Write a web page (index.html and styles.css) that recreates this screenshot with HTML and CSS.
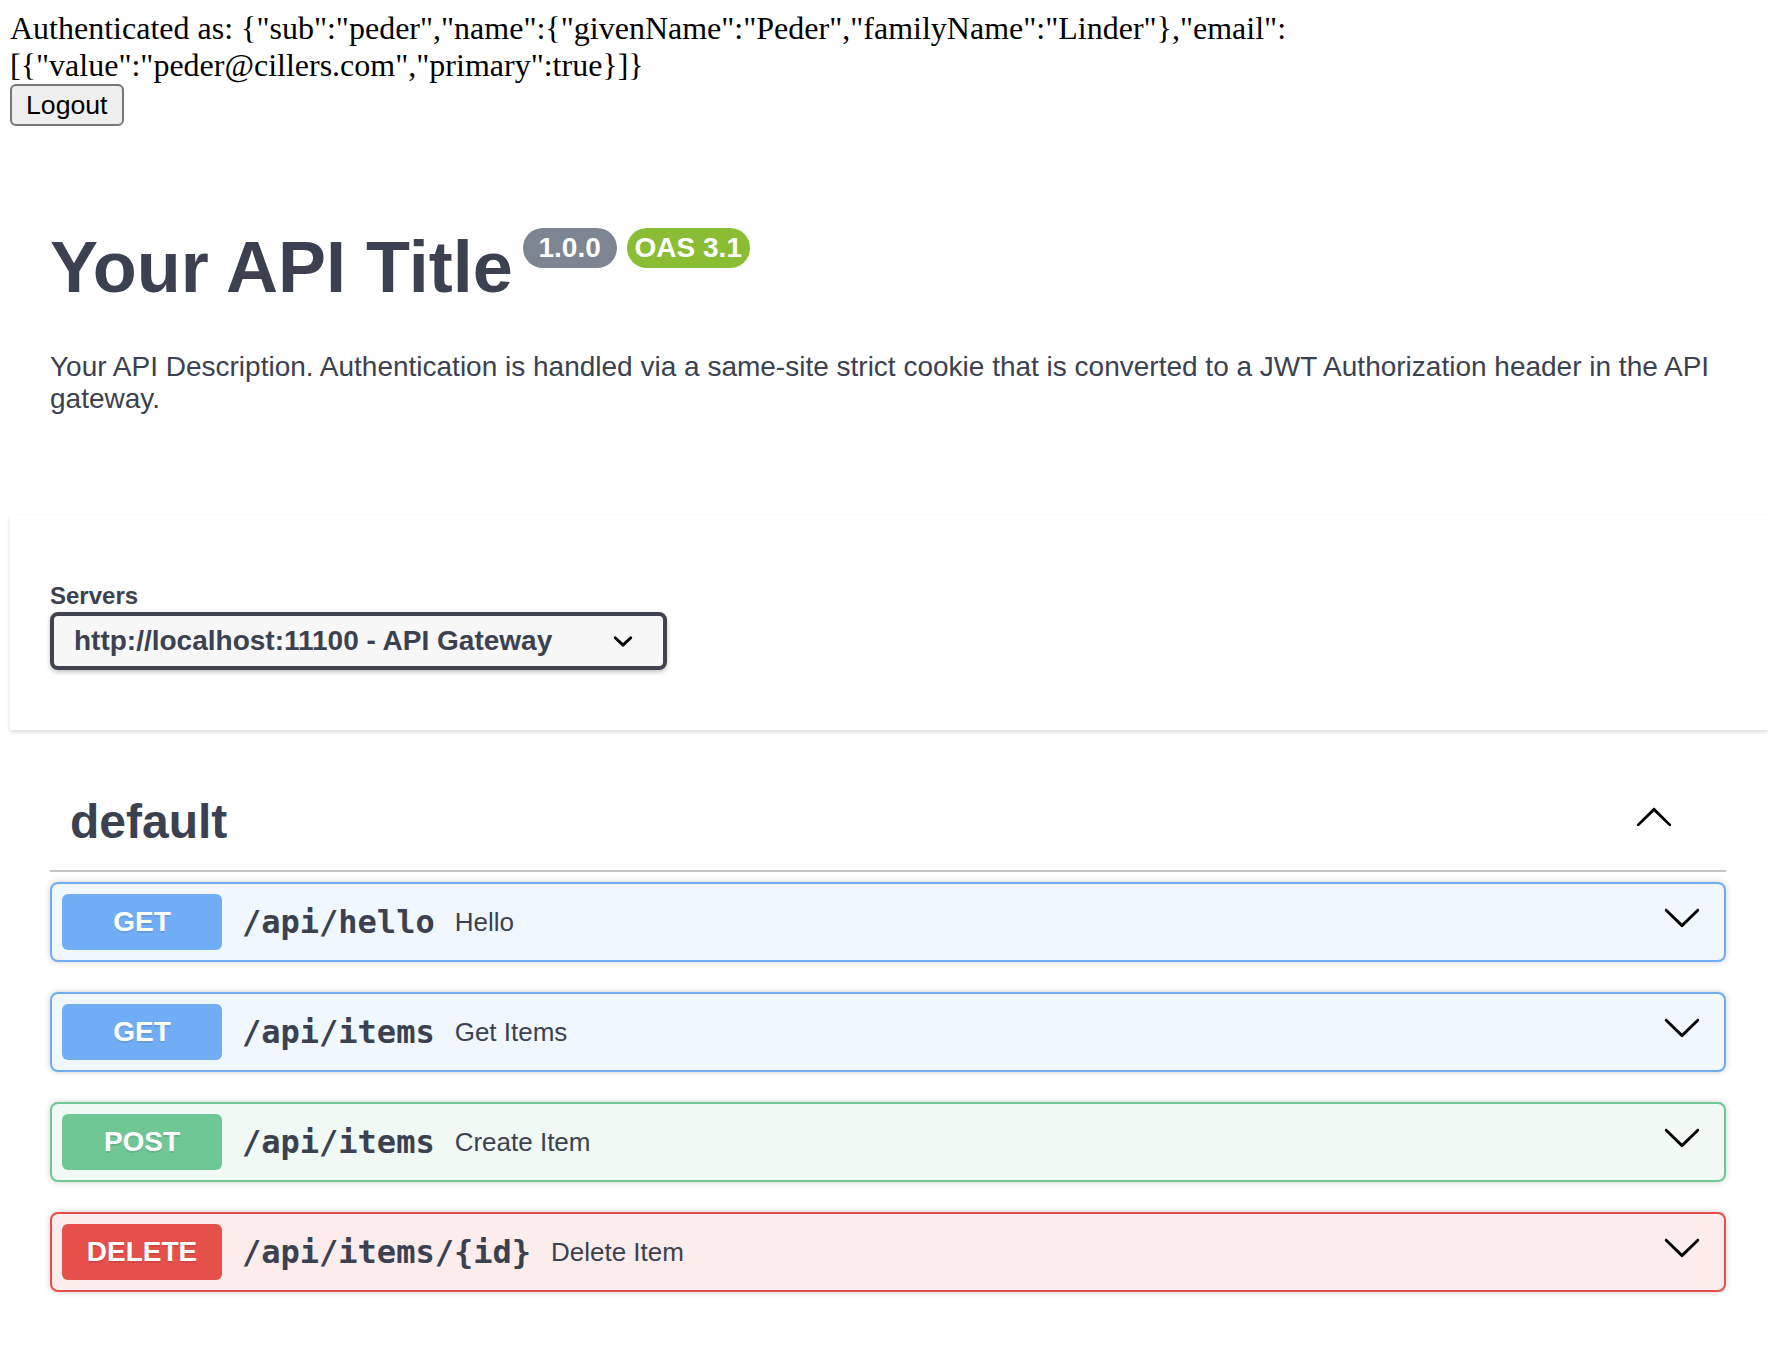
FILE: index.html
```html
<!DOCTYPE html>
<html lang="en">
<head>
<meta charset="utf-8">
<title>Your API Title</title>
<link rel="stylesheet" href="styles.css">
</head>
<body>
<div class="auth">
  <div class="auth-text">Authenticated as: {"sub":"peder","name":{"givenName":"Peder","familyName":"Linder"},"email":[{"value":"peder@cillers.com","primary":true}]}</div>
  <div class="auth-actions"><button class="logout" type="button">Logout</button></div>
</div>

<div class="swagger">
  <div class="wrapper info">
    <hgroup class="main">
      <h2 class="title"><span class="title-text">Your API Title</span><span class="badge version"> 1.0.0 </span><span class="badge oas">OAS 3.1</span></h2>
    </hgroup>
    <div class="description">
      <p>Your API Description. Authentication is handled via a same-site strict cookie that is converted to a JWT Authorization header in the API gateway.</p>
    </div>
  </div>

  <div class="scheme-container">
    <div class="wrapper">
      <div class="servers">
        <span class="servers-title">Servers</span>
        <div class="select">
          <span class="select-value">http://localhost:11100 - API Gateway</span>
          <svg class="select-chevron" viewBox="0 0 20 20" width="40" height="40" aria-hidden="true"><path d="M13.418 7.859a.695.695 0 0 1 .978 0 .68.68 0 0 1 0 .969l-3.908 3.83a.697.697 0 0 1-.979 0l-3.908-3.830a.68.68 0 0 1 0-.969.695.695 0 0 1 .978 0L10 11l3.418-3.141z"/></svg>
        </div>
      </div>
    </div>
  </div>

  <div class="wrapper">
    <section class="tag-section">
      <h3 class="tag">
        <span class="tag-name">default</span>
        <svg class="arrow tag-arrow" viewBox="0 0 20 20" width="40" height="40" aria-hidden="true"><path d="M17.418 14.908c.272.268.709.268.979 0s.271-.701 0-.969l-7.908-7.830c-.27-.268-.707-.268-.979 0l-7.908 7.830c-.27.268-.27.701 0 .969.271.268.709.268.979 0L10 7.749l7.418 7.159z"/></svg>
      </h3>

      <div class="opblock get">
        <div class="summary">
          <span class="method">GET</span>
          <span class="path">/api/hello</span>
          <span class="desc">Hello</span>
          <svg class="arrow op-arrow" viewBox="0 0 20 20" width="40" height="40" aria-hidden="true"><path d="M17.418 6.109c.272-.268.709-.268.979 0s.271.701 0 .969l-7.908 7.830c-.27.268-.707.268-.979 0l-7.908-7.830c-.27-.268-.27-.701 0-.969.271-.268.709-.268.979 0L10 13.25l7.418-7.141z"/></svg>
        </div>
      </div>

      <div class="opblock get">
        <div class="summary">
          <span class="method">GET</span>
          <span class="path">/api/items</span>
          <span class="desc">Get Items</span>
          <svg class="arrow op-arrow" viewBox="0 0 20 20" width="40" height="40" aria-hidden="true"><path d="M17.418 6.109c.272-.268.709-.268.979 0s.271.701 0 .969l-7.908 7.830c-.27.268-.707.268-.979 0l-7.908-7.830c-.27-.268-.27-.701 0-.969.271-.268.709-.268.979 0L10 13.25l7.418-7.141z"/></svg>
        </div>
      </div>

      <div class="opblock post">
        <div class="summary">
          <span class="method">POST</span>
          <span class="path">/api/items</span>
          <span class="desc">Create Item</span>
          <svg class="arrow op-arrow" viewBox="0 0 20 20" width="40" height="40" aria-hidden="true"><path d="M17.418 6.109c.272-.268.709-.268.979 0s.271.701 0 .969l-7.908 7.830c-.27.268-.707.268-.979 0l-7.908-7.830c-.27-.268-.27-.701 0-.969.271-.268.709-.268.979 0L10 13.25l7.418-7.141z"/></svg>
        </div>
      </div>

      <div class="opblock delete">
        <div class="summary">
          <span class="method">DELETE</span>
          <span class="path">/api/items/{id}</span>
          <span class="desc">Delete Item</span>
          <svg class="arrow op-arrow" viewBox="0 0 20 20" width="40" height="40" aria-hidden="true"><path d="M17.418 6.109c.272-.268.709-.268.979 0s.271.701 0 .969l-7.908 7.830c-.27.268-.707.268-.979 0l-7.908-7.830c-.27-.268-.27-.701 0-.969.271-.268.709-.268.979 0L10 13.25l7.418-7.141z"/></svg>
        </div>
      </div>
    </section>
  </div>
</div>
</body>
</html>
```

FILE: styles.css
```css
html, body {
  margin: 0;
  padding: 0;
  background: #ffffff;
}

body {
  font-family: "Liberation Serif", "Times New Roman", serif;
}

/* ---------- auth header ---------- */
.auth {
  padding: 10px 10px 0 10px;
}

.auth-text {
  font-family: "Liberation Serif", "Times New Roman", serif;
  font-size: 32px;
  line-height: 36.8px;
  color: #000000;
}

.auth-actions {
  margin-top: 0;
  display: flex;
}

.logout {
  font-family: "Liberation Sans", Arial, sans-serif;
  font-size: 26.67px;
  line-height: 30.6px;
  padding: 4px 14px;
  border: 2px solid #767676;
  border-radius: 6px;
  background: #efefef;
  color: #000000;
}

/* ---------- swagger ---------- */
.swagger {
  margin-left: 10px;
  font-family: "Liberation Sans", Arial, sans-serif;
  color: #3b4151;
}

.wrapper {
  box-sizing: border-box;
  padding: 0 42px 0 40px;
}

.info {
  margin-top: 100px;
  margin-bottom: 100px;
}

.main {
  margin: 0 0 42px 0;
}

.title {
  margin: 0;
  display: flex;
  align-items: flex-start;
  font-size: 72px;
  font-weight: 700;
  color: #3b4151;
}

.title-text {
  line-height: 82.8px;
}

.badge {
  margin-left: 10px;
  margin-top: 2px;
  padding: 4px 8px;
  border-radius: 114px;
  font-size: 28px;
  line-height: 32px;
  font-weight: 700;
  color: #ffffff;
  white-space: pre;
}

.badge.version {
  background: #7d8492;
}

.badge.oas {
  background: #8bbd34;
}

.description p {
  margin: 0;
  font-size: 28px;
  line-height: 32.2px;
  color: #3b4151;
}

/* ---------- servers ---------- */
.scheme-container {
  background: #ffffff;
  box-shadow: 0 2px 4px 0 rgba(0, 0, 0, 0.15);
  padding: 67px 0 60px 0;
}

.servers {
  display: flex;
  flex-direction: column;
  align-items: flex-start;
}

.servers-title {
  font-size: 24px;
  line-height: 27.6px;
  font-weight: 700;
  color: #3b4151;
}

.select {
  margin-top: 2px;
  box-sizing: border-box;
  width: 617px;
  height: 58px;
  display: flex;
  align-items: center;
  padding: 0 20px 0 20px;
  border: 4px solid #41444e;
  border-radius: 8px;
  background: #f7f7f7;
  box-shadow: 0 2px 4px 0 rgba(0, 0, 0, 0.25);
  font-size: 28px;
  font-weight: 700;
  color: #3b4151;
}

.select-value {
  line-height: 32px;
}

.select-chevron {
  margin-left: auto;
  fill: #000000;
  flex: none;
}

/* ---------- tag section ---------- */
.tag-section {
  margin-top: 40px;
}

.tag {
  margin: 0 0 10px 0;
  display: flex;
  align-items: center;
  padding: 24px 40px 21px 20px;
  border-bottom: 2px solid rgba(59, 65, 81, 0.3);
  font-size: 48px;
  font-weight: 700;
  color: #3b4151;
}

.tag-name {
  line-height: 55.2px;
}

.arrow {
  flex: none;
  fill: #000000;
  margin-left: auto;
  margin-right: 12px;
  margin-bottom: 11px;
}

/* ---------- operations ---------- */
.opblock {
  margin: 0 0 30px 0;
  border: 2px solid;
  border-radius: 8px;
  box-shadow: 0 0 6px rgba(0, 0, 0, 0.19);
}

.summary {
  display: flex;
  align-items: center;
  padding: 10px;
}

.method {
  box-sizing: border-box;
  min-width: 160px;
  padding: 12px 0;
  border-radius: 6px;
  text-align: center;
  font-size: 28px;
  line-height: 32px;
  font-weight: 700;
  color: #ffffff;
  text-shadow: 0 2px 0 rgba(0, 0, 0, 0.1);
}

.path {
  padding: 0 20px;
  font-family: "DejaVu Sans Mono", "Liberation Mono", monospace;
  font-size: 32px;
  font-weight: 700;
  color: #3b4151;
}

.desc {
  font-size: 26px;
  color: #3b4151;
}

.opblock.get {
  background: #f0f7fe;
  border-color: #71adf5;
}

.opblock.get .method {
  background: #71adf5;
}

.opblock.post {
  background: #f0f9f4;
  border-color: #6fc795;
}

.opblock.post .method {
  background: #6fc795;
}

.opblock.delete {
  background: #fcecec;
  border-color: #e5504b;
}

.opblock.delete .method {
  background: #e5504b;
}
```
